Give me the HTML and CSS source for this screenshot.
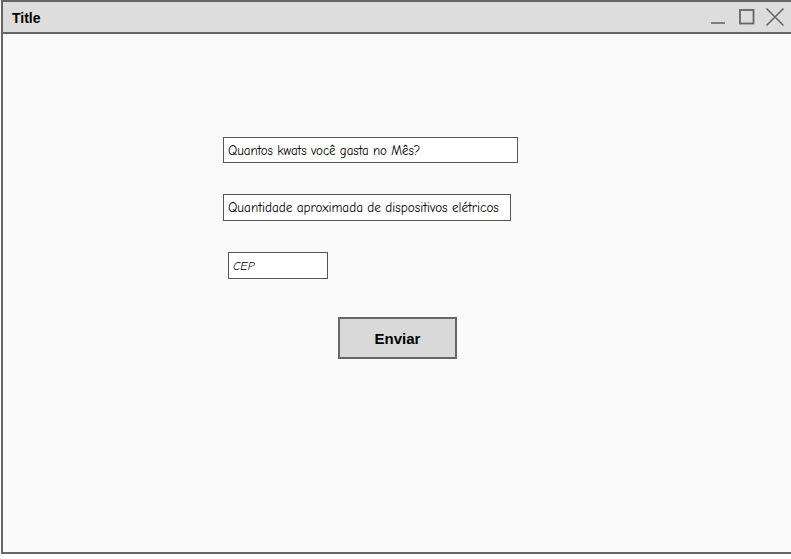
FILE: index.html
```html
<!DOCTYPE html>
<html>
<head>
<meta charset="utf-8">
<link rel="stylesheet" href="styles.css">
</head>
<body>
<div class="window">
  <div class="titlebar">
    <span class="title">Title</span>
    <div class="controls">
      <svg class="icon icon-min" width="16" height="18" viewBox="0 0 16 18"><path d="M1 15 H15" stroke="#666" stroke-width="1.6" fill="none"/></svg>
      <svg class="icon icon-max" width="18" height="18" viewBox="0 0 18 18"><rect x="2" y="2" width="13.5" height="13.5" stroke="#666" stroke-width="1.8" fill="none"/></svg>
      <svg class="icon icon-close" width="20" height="20" viewBox="0 0 20 20"><path d="M1.5 1.5 L18.5 18.5 M18.5 1.5 L1.5 18.5" stroke="#666" stroke-width="1.6" fill="none"/></svg>
    </div>
  </div>
  <div class="content">
    <div class="field field-kwats">Quantos kwats você gasta no Mês?</div>
    <div class="field field-disp">Quantidade aproximada de dispositivos elétricos</div>
    <div class="field field-cep">CEP</div>
    <button class="btn">Enviar</button>
  </div>
</div>
</body>
</html>
```
FILE: styles.css
```css
html, body {
  margin: 0;
  padding: 0;
  background: #ffffff;
  overflow: hidden;
  width: 791px;
  height: 559px;
}
.window {
  margin-left: 1px;
  width: 800px;
  height: 550px;
  border: 2px solid #666666;
  border-right: none;
  background: #fafafa;
  display: flex;
  flex-direction: column;
}
.titlebar {
  height: 30px;
  background: #dddddd;
  border-bottom: 2px solid #666666;
  display: flex;
  align-items: center;
  padding-left: 9px;
  padding-right: 18px;
}
.title {
  font-family: "Liberation Sans", Arial, sans-serif;
  font-weight: bold;
  font-size: 14px;
  color: #000;
  flex: 1;
  margin-top: 1px;
}
.controls {
  display: flex;
  align-items: center;
}
.icon { display: block; }
.icon-max { margin-left: 12px; }
.icon-close { margin-left: 9px; }
.content {
  flex: 1;
  display: flex;
  flex-direction: column;
  align-items: flex-start;
  padding-top: 103px;
}
.field {
  box-sizing: border-box;
  background: #ffffff;
  border: 1.5px solid #555555;
  font-family: "Comic Neue", "Comic Sans MS", "Open Sans", sans-serif;
  font-size: 13px;
  color: #000;
  display: flex;
  align-items: center;
  padding-left: 4px;
}
.field-kwats {
  margin-left: 220px;
  width: 295px;
  height: 26px;
  letter-spacing: -0.05px;
}
.field-disp {
  margin-left: 220px;
  margin-top: 31px;
  width: 288px;
  height: 27px;
  font-size: 13.2px;
}
.field-cep {
  margin-left: 225px;
  margin-top: 31px;
  width: 100px;
  height: 27px;
  font-size: 12px;
  font-style: italic;
}
.btn {
  margin-left: 335px;
  margin-top: 38px;
  width: 119px;
  height: 42px;
  background: #d9d9d9;
  border: 2px solid #666666;
  font-family: "Liberation Sans", Arial, sans-serif;
  font-weight: bold;
  font-size: 15px;
  color: #000;
  padding: 0;
}
```
